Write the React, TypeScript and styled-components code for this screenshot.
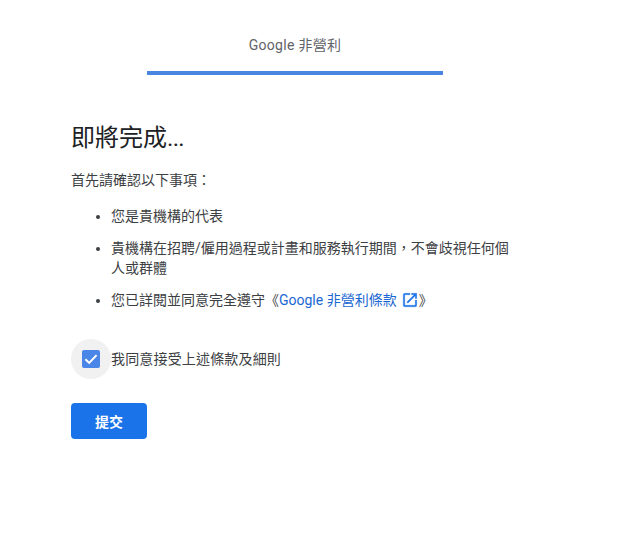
import styled, { createGlobalStyle } from "styled-components";

const GlobalStyle = createGlobalStyle`
  html, body {
    margin: 0;
    padding: 0;
    background: #fff;
  }
  body {
    font-family: Roboto, "Noto Sans CJK TC", sans-serif;
  }
`;

const App = () => {
  return (
    <>
      <GlobalStyle />
      <Page>
        <Header>
          <Title>Google 非營利</Title>
          <Progress />
        </Header>
        <Content>
          <Heading>
            即將完成<Dots>...</Dots>
          </Heading>
          <Intro>首先請確認以下事項：</Intro>
          <List>
            <Item>您是貴機構的代表</Item>
            <Item>貴機構在招聘/僱用過程或計畫和服務執行期間，不會歧視任何個人或群體</Item>
            <Item>
              您已詳閱並同意完全遵守《
              <TermsLink href="#">
                Google 非營利條款
                <ExternalIcon viewBox="0 0 24 24">
                  <path d="M19 19H5V5h7V3H5a2 2 0 0 0-2 2v14a2 2 0 0 0 2 2h14a2 2 0 0 0 2-2v-7h-2v7zM14 3v2h3.59l-9.83 9.83 1.41 1.41L19 6.41V10h2V3h-7z" />
                </ExternalIcon>
              </TermsLink>
              》
            </Item>
          </List>
          <AgreeRow>
            <CheckHalo>
              <CheckBox>
                <svg viewBox="0 0 18 18" width="18" height="18">
                  <path d="M3.4 9.2l3.8 3.7 7.4-7.8" fill="none" stroke="#fff" strokeWidth="2" />
                </svg>
              </CheckBox>
            </CheckHalo>
            <AgreeLabel>我同意接受上述條款及細則</AgreeLabel>
          </AgreeRow>
          <SubmitButton type="button">提交</SubmitButton>
        </Content>
      </Page>
    </>
  );
};

const Page = styled.div`
  width: 628px;
  height: 541px;
  overflow: hidden;
  background: #fff;
`;

const Header = styled.header`
  display: flex;
  flex-direction: column;
  align-items: center;
  width: 296px;
  margin-left: 147px;
  padding-top: 35px;
`;

const Title = styled.div`
  font-size: 14px;
  line-height: 20px;
  letter-spacing: 0.3px;
  color: #5f6368;
`;

const Progress = styled.div`
  width: 100%;
  height: 4px;
  margin-top: 16px;
  background: #4a86e0;
`;

const Content = styled.main`
  padding: 47px 0 0 71px;
  width: 440px;
`;

const Heading = styled.h1`
  margin: 0;
  font-size: 24px;
  font-weight: 400;
  line-height: 32px;
  color: #202124;
`;

const Dots = styled.span`
  letter-spacing: -0.7px;
`;

const Intro = styled.p`
  margin: 16px 0 0;
  font-size: 14px;
  line-height: 20px;
  color: #3c4043;
`;

const List = styled.ul`
  margin: 16px 0 0;
  padding: 0 0 0 40px;
  list-style: disc;
`;

const Item = styled.li`
  font-size: 14px;
  line-height: 20px;
  color: #3c4043;
  margin-bottom: 12px;
`;

const TermsLink = styled.a`
  color: #1967d2;
  text-decoration: none;
`;

const ExternalIcon = styled.svg`
  width: 18px;
  height: 18px;
  margin-left: 4px;
  vertical-align: -4px;
  fill: #1a73e8;
  stroke: #1a73e8;
  stroke-width: 0.4;
`;

const AgreeRow = styled.div`
  display: flex;
  align-items: center;
  margin-top: 29px;
`;

const CheckHalo = styled.div`
  display: flex;
  align-items: center;
  justify-content: center;
  width: 40px;
  height: 40px;
  border-radius: 50%;
  background: #f1f1f1;
`;

const CheckBox = styled.div`
  display: flex;
  width: 18px;
  height: 18px;
  border-radius: 2px;
  background: #4a86e8;
`;

const AgreeLabel = styled.span`
  font-size: 14px;
  line-height: 20px;
  letter-spacing: 0.17px;
  color: #3c4043;
`;

const SubmitButton = styled.button`
  display: block;
  width: 76px;
  height: 36px;
  margin-top: 24px;
  border: 0;
  border-radius: 4px;
  background: #1a73e8;
  color: #fff;
  font-family: inherit;
  font-size: 14px;
  font-weight: 700;
`;

export default App;
